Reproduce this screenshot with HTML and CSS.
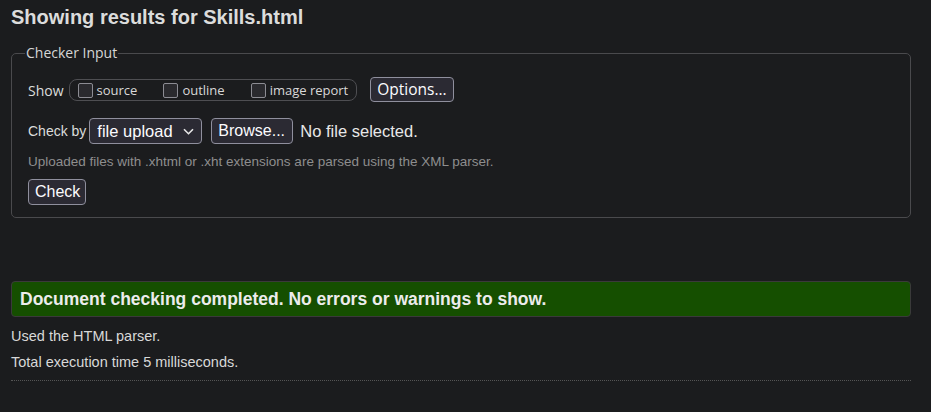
FILE: index.html
```html
<!DOCTYPE html>
<html>
<head>
<meta charset="utf-8">
<link rel="stylesheet" href="styles.css">
</head>
<body>
<h2 class="title">Showing results for Skills.html</h2>
<fieldset class="checker">
  <legend class="legend">Checker Input</legend>
  <div class="row row-show">
    <span class="label-sans">Show</span>
    <div class="pill">
      <label class="opt"><span class="box"></span>source</label>
      <label class="opt"><span class="box"></span>outline</label>
      <label class="opt"><span class="box"></span>image report</label>
    </div>
    <span class="btn btn-options">Options...</span>
  </div>
  <div class="row row-check">
    <span class="label-checkby">Check by</span>
    <span class="select">file upload
      <svg class="chev" width="11" height="7" viewBox="0 0 11 7"><path d="M1 1.2 L5.5 5.7 L10 1.2" fill="none" stroke="#e8e8e8" stroke-width="1.6"/></svg>
    </span>
    <span class="btn btn-browse">Browse...</span>
    <span class="nofile">No file selected.</span>
  </div>
  <p class="help">Uploaded files with .xhtml or .xht extensions are parsed using the XML parser.</p>
  <span class="btn btn-check">Check</span>
</fieldset>
<div class="success">Document checking completed. No errors or warnings to show.</div>
<p class="info">Used the HTML parser.</p>
<p class="info">Total execution time 5 milliseconds.</p>
<hr class="rule">
</body>
</html>
```
FILE: styles.css
```css
html, body {
  background: #1b1c1e;
}
body {
  margin: 0;
  padding: 0 20px 0 11px;
  color: #e2e2e2;
  font-family: "Liberation Sans", Arial, sans-serif;
  font-size: 14px;
}
.title {
  margin: 6px 0 0;
  font-size: 20px;
  line-height: 23px;
  font-weight: bold;
  color: #dcdcdc;
}
.checker {
  margin: 15px 0 0;
  padding: 4px 16px 12px 16px;
  border: 1px solid #4a4a4d;
  border-radius: 5px;
  min-width: 0;
}
.legend {
  padding: 0 1px;
  margin-left: -3px;
  font-family: "Open Sans", "Noto Sans", sans-serif;
  font-size: 14px;
  color: #d6d6d6;
  line-height: 18px;
}
.row {
  display: flex;
  align-items: center;
}
.row-show {
  margin-top: 10px;
  height: 28px;
}
.label-sans {
  font-family: "Open Sans", "Noto Sans", sans-serif;
  font-size: 14px;
  color: #dcdcdc;
  margin-right: 5px;
}
.pill {
  display: flex;
  align-items: center;
  height: 20px;
  border: 1px solid #4e4e52;
  border-radius: 8px;
  padding: 0 8px 0 8px;
  gap: 26px;
}
.opt {
  display: flex;
  align-items: center;
  font-family: "Open Sans", "Noto Sans", sans-serif;
  font-size: 13px;
  color: #d8d8d8;
}
.box {
  box-sizing: border-box;
  width: 15px;
  height: 15px;
  border: 1px solid #8c8c93;
  border-radius: 2px;
  background: #2a2a2e;
  margin-right: 4px;
}
.btn {
  display: inline-flex;
  align-items: center;
  box-sizing: border-box;
  background: #2b2a33;
  border: 1px solid #8f8f9d;
  border-radius: 4px;
  color: #fbfbfe;
  font-size: 16px;
  padding: 0 6px;
}
.btn-options {
  margin-left: 13px;
  height: 25px;
  font-family: "Open Sans", "Noto Sans", sans-serif;
  font-size: 15.5px;
  margin-top: -2px;
}
.row-check {
  margin-top: 14px;
  height: 26px;
}
.label-checkby {
  font-size: 14px;
  color: #dcdcdc;
  margin-right: 3px;
}
.select {
  display: inline-flex;
  align-items: center;
  box-sizing: border-box;
  height: 26px;
  width: 113px;
  padding: 0 6px 0 7px;
  background: #2b2a33;
  border: 1px solid #8f8f9d;
  border-radius: 4px;
  color: #fbfbfe;
  font-size: 16.5px;
  justify-content: space-between;
}
.chev {
  margin-right: 1px;
}
.btn-browse {
  margin-left: 9px;
  height: 26px;
  width: 82px;
}
.nofile {
  margin-left: 7px;
  font-size: 16.5px;
  color: #e8e8e8;
}
.help {
  margin: 9px 0 0;
  font-size: 13.5px;
  line-height: 18px;
  color: #8e8e8e;
}
.btn-check {
  margin-top: 8px;
  height: 26px;
  width: 58px;
}
.success {
  margin-top: 63px;
  height: 36px;
  box-sizing: border-box;
  background: #154f00;
  border: 1px solid #3a3a3a;
  border-radius: 4px;
  padding: 0 8px;
  display: flex;
  align-items: center;
  font-weight: bold;
  font-size: 17.5px;
  color: #ececec;
}
.info {
  margin: 11px 0 0;
  line-height: 17px;
  font-size: 14.5px;
  color: #d8d8d8;
}
.info + .info {
  margin-top: 9px;
}
.rule {
  margin: 9px 0 0;
  border: 0;
  border-top: 1px dotted #555;
}
```
